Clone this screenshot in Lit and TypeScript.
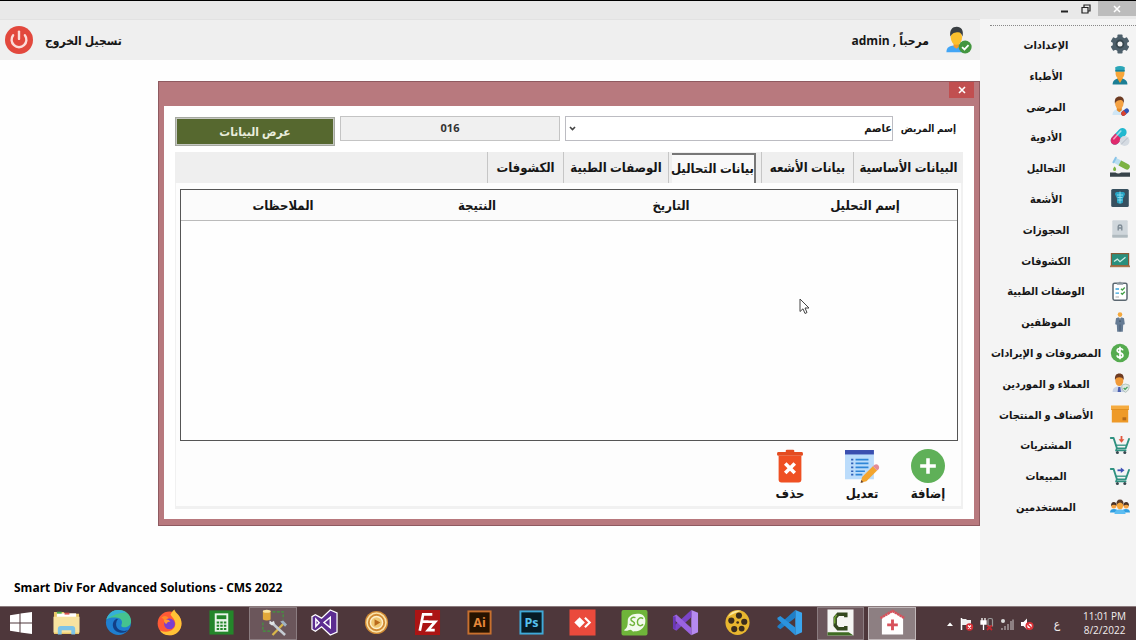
import { LitElement, html, css, svg, TemplateResult } from "lit";
import { customElement, property, state } from "lit/decorators.js";
import { classMap } from "lit/directives/class-map.js";

/* ---------- icon artwork ---------- */

const cart = (mark: TemplateResult) => svg`
  <path d="M.8 3h2.800l3.400 10.500h8.600L19 4" fill="none" stroke="#2f9180" stroke-width="1.900" stroke-linejoin="round" stroke-linecap="round"/>
  <path d="M5.600 10.200h11" fill="none" stroke="#2f9180" stroke-width="1.300"/>
  <path d="M6.600 13.500l-.6 2h10.400" fill="none" stroke="#2f9180" stroke-width="1.500"/>
  <circle cx="7.400" cy="17.400" r="1.500" fill="#37474f"/><circle cx="14.800" cy="17.400" r="1.500" fill="#37474f"/>
  ${mark}`;

const icons: Record<string, TemplateResult> = {
  gear: svg`
    <g fill="#4d5f6a">
      <rect x="7.4" y=".6" width="5.2" height="18.8" rx="1"/>
      <rect x="7.4" y=".6" width="5.2" height="18.8" rx="1" transform="rotate(60 10 10)"/>
      <rect x="7.4" y=".6" width="5.2" height="18.8" rx="1" transform="rotate(120 10 10)"/>
      <circle cx="10" cy="10" r="7.3"/>
    </g>
    <circle cx="10" cy="10" r="4.4" fill="#37474f"/><circle cx="10" cy="10" r="2.5" fill="#f4f4f4"/>`,
  doctor: svg`
    <path d="M2.6 19.4c0-4 3-5.8 7.4-5.8s7.4 1.800 7.400 5.800z" fill="#1c7f95"/>
    <path d="M7 13h6l-3 5z" fill="#f39c2d"/>
    <path d="M5.600 5.500h8.800v3c0 3-2 5.300-4.400 5.300S5.600 11.500 5.600 8.500z" fill="#f7a63a"/>
    <path d="M5.200 2.200Q10 -.3 14.800 2.200l-.3 4.200h-9z" fill="#2ba6b8"/>
    <path d="M5.400 4.900h9.200v1.500H5.400z" fill="#17809a"/>`,
  patient: svg`
    <path d="M2.500 19c0-4 2.600-5.700 6.800-5.700s6.500 1.700 6.500 5.700z" fill="#cfe6f5"/>
    <path d="M6.800 11h5v3.300l-2.500 2-2.500-2z" fill="#e58a26"/>
    <ellipse cx="9.300" cy="7.600" rx="4.200" ry="5.200" fill="#f5a243"/>
    <path d="M4.900 7.500C4.300 2.600 6.500.6 9.600.6s5 2.200 4.200 6.900c-.5-2.200-1.500-3.300-3-3.500-2.500.1-4.600.6-5.900 3.500z" fill="#6d3b22"/>
    <g transform="rotate(-40 15 16)"><rect x="10.500" y="13.800" width="9" height="4.600" rx="2.300" fill="#2f55b5"/><path d="M10.500 16.100a2.300 2.300 0 0 1 2.300-2.300H15v4.600h-2.200a2.300 2.300 0 0 1-2.300-2.300z" fill="#d9432f"/></g>`,
  pills: svg`
    <g transform="rotate(-48 8.800 9.500)">
      <rect x="-1" y="5" width="19.600" height="8.600" rx="4.300" fill="#22b8cf"/>
      <path d="M3.300 5H8.800v8.600H3.300a4.300 4.300 0 0 1 0-8.600z" fill="#e0296c"/>
      <rect x="3" y="6.600" width="12" height="1.600" rx=".8" fill="#fff" opacity=".55"/>
    </g>
    <circle cx="14.600" cy="14" r="4.900" fill="#d5dbe2"/><path d="M11.200 17.300l6.600-6.600" stroke="#b4bcc6"/>`,
  analysis: svg`
    <g transform="rotate(28 11 6)"><rect x="3" y="2.800" width="17" height="5.600" rx="2.600" fill="#b9def0"/><path d="M9.500 2.800h8a2.800 2.800 0 0 1 0 5.600h-8z" fill="#7cb342"/><rect x="2.500" y="2" width="2" height="7" rx=".8" fill="#89c4e8"/></g>
    <path d="M4.600 8.500c1 1.300 1.500 2 1.500 2.900a1.500 1.500 0 0 1-3 0c0-.9.600-1.600 1.500-2.900z" fill="#7cb342"/>
    <path d="M0 14.500h5.500c1.500 1.400 4 1.400 5.600 0H20v4.300H0z" fill="#37434a"/>`,
  xray: svg`
    <rect x="1.200" y="1" width="17.600" height="18" rx="1.500" fill="#37505f"/>
    <path d="M7 4h6a2 2 0 0 1 1.400 3.400L13 10.600v3.600c0 1.800-6 1.800-6 0v-3.600L5.600 7.400A2 2 0 0 1 7 4z" fill="#27a4c4"/>
    <path d="M10 3.500v12M7 7h6M7.500 9.500h5M7.500 12h5" stroke="#8fe0f0" stroke-width=".9"/>`,
  booking: svg`
    <rect x="2.300" y="1.200" width="15.400" height="17.400" rx="1" fill="#cfd6db"/><path d="M2.300 15.800h15.400v2.800H2.300z" fill="#b0babf"/>
    <path d="M8.200 11.500v-4q0-1.500 1.800-1.500t1.800 1.500v4M8.200 9h3.600" fill="none" stroke="#7f8c96" stroke-width="1.400"/>`,
  board: svg`
    <rect x=".8" y="3" width="18.400" height="13" fill="#8a5a36"/><rect x="2" y="4.200" width="16" height="10.800" fill="#2a8f7c"/>
    <path d="M4 11.500l3.300-2.400 2.700 2.600 5.500-4.400" fill="none" stroke="#cfeee6" stroke-width="1.300"/>
    <rect x="0" y="15.500" width="20" height="1.700" fill="#a9744b"/>`,
  clipboard: svg`
    <rect x="3" y="2.200" width="14" height="17" rx="1.600" fill="#fff" stroke="#5b6770" stroke-width="1.500"/>
    <path d="M6.800 3.800V2h1.500a1.800 1.800 0 0 1 3.400 0h1.500v1.800z" fill="#8b969e"/>
    <path d="M5.500 8h3.500M5.500 12.200h3.500" stroke="#35a2dc" stroke-width="1.300"/><path d="M5.500 16h3.500" stroke="#aaa"/>
    <path d="M11 7.700l1.300 1.300 2.500-2.500M11 12l1.300 1.300 2.500-2.500" fill="none" stroke="#43a047" stroke-width="1.300"/>`,
  employee: svg`
    <circle cx="10" cy="2.600" r="2.300" fill="#f5a83c"/>
    <path d="M6 6.200Q10 4.200 14 6.200l.8 6-1.600.5-.4 7H7.200l-.4-7-1.600-.5z" fill="#647a93"/>
    <path d="M8.800 5.300h2.400L10 9z" fill="#fff"/><path d="M10 6v4" stroke="#32475c"/><path d="M10 12.500v7" stroke="#42566b" stroke-width=".8"/>`,
  money: svg`
    <circle cx="10" cy="10" r="9.200" fill="#55ab4f"/>
    <path d="M12.800 7.400c-.3-1.400-1.500-1.900-2.800-1.900-1.600 0-2.800.8-2.800 2.100 0 3 5.700 1.500 5.700 4.600 0 1.400-1.200 2.300-2.900 2.300-1.600 0-2.800-.8-3-2.200M10 3.700v12.600" fill="none" stroke="#fff" stroke-width="1.700"/>`,
  client: svg`
    <path d="M2.600 19c0-3.800 2.500-5.400 6.700-5.400s6.700 1.600 6.700 5.400z" fill="#c9d3e6"/><path d="M8.300 14h2l.7 5H7.600z" fill="#4a5fb0"/>
    <ellipse cx="9.300" cy="7.800" rx="4" ry="5.200" fill="#f19a38"/>
    <path d="M5 7C4.600 2.600 6.300.6 9.400.6S14.100 2.600 13.700 7c-1-2-2.200-2.700-4.400-2.700S6 5 5 7z" fill="#6d3b22"/>
    <path d="M15.500 11l3.700 1.100c.2 3.600-1 6-3.700 7.200-2.700-1.200-3.900-3.600-3.700-7.200z" fill="#dfe9e4" stroke="#93a79d" stroke-width=".6"/>
    <path d="M13.700 15l1.400 1.400 2.400-2.600" fill="none" stroke="#3f9e57" stroke-width="1.200"/>`,
  box: svg`
    <rect x="1.800" y="4" width="16.400" height="14.500" fill="#ee9a28"/><rect x="1" y="1.500" width="18" height="4" fill="#f5ab3f"/>
    <path d="M1 5.500h18" stroke="#d9861a" stroke-width=".7"/><rect x="12.500" y="13.300" width="3.700" height="3" fill="#b36a19"/>`,
  buy: cart(svg`<path d="M11.500 1v4" stroke="#e2573d" stroke-width="1.800"/><path d="M8.600 4.200h5.800l-2.900 3.500z" fill="#e2573d"/>`),
  sell: cart(svg`<path d="M7.500 4.300h4" stroke="#3f51b5" stroke-width="1.800"/><path d="M10.800 1.500v5.600l3.700-2.800z" fill="#3f51b5"/>`),
  users: svg`
    <path d="M0 15.500c0-2.500 1.500-3.500 4-3.500s4 1 4 3.500zM12 15.500c0-2.500 1.500-3.500 4-3.500s4 1 4 3.500z" fill="#2f9ee0"/>
    <circle cx="3.800" cy="8.800" r="2.600" fill="#f5a243"/><path d="M1 9q0-4 2.800-4T6.600 9Q4 6.500 1 9z" fill="#4b3327"/>
    <circle cx="16.200" cy="8.800" r="2.600" fill="#f5a243"/><path d="M13.400 9q0-4 2.800-4t2.800 4q-2.600-2.500-5.600 0z" fill="#4b3327"/>
    <path d="M4.500 17c0-3.400 2-4.600 5.500-4.600s5.500 1.200 5.500 4.600z" fill="#5cbdf2"/>
    <ellipse cx="10" cy="8" rx="3.200" ry="4.200" fill="#f7a63a"/><path d="M6.500 8q-.5-5.500 3.500-5.500T13.500 8Q12 5.500 10 5.500T6.500 8z" fill="#5d3d2b"/>`,

  power: svg`
    <circle cx="10" cy="10" r="10" fill="#e2483d"/>
    <path d="M5.800 6.600a5.300 5.300 0 1 0 8.400 0" fill="none" stroke="#fbdcd9" stroke-width="1.700" stroke-linecap="round"/>
    <path d="M10 4v5.200" stroke="#fbdcd9" stroke-width="1.700" stroke-linecap="round"/>`,
  admin: svg`
    <path d="M.3 19c0-3.800 2.300-5 7.400-5s7.300 1.200 7.300 5z" fill="#42a5f5"/>
    <path d="M5.600 12h4.200v3l-2.100 1.500L5.600 15z" fill="#f09a2c"/>
    <ellipse cx="7.700" cy="8" rx="4.200" ry="5.600" fill="#fbc02d"/>
    <path d="M3.200 7.500C2.500 2.500 4.600.2 8 .2s5.200 2.500 4.300 7.300C11.500 5.400 10.800 4.300 9 4.200 6.600 4.300 4.500 4.700 3.200 7.500z" fill="#3a3f43"/>
    <circle cx="14.200" cy="15.200" r="4.800" fill="#43963f"/><path d="M11.900 15.200l1.800 1.800 3-3.200" fill="none" stroke="#fff" stroke-width="1.300"/>`,
  add: svg`<circle cx="10" cy="10" r="10" fill="#5fb058"/><path d="M10 5.400v9.200M5.400 10h9.200" stroke="#fff" stroke-width="2.100"/>`,
  edit: svg`
    <rect x="0" y=".6" width="17" height="17.200" fill="#bbdcfb"/><rect x="0" y=".6" width="17" height="2.600" fill="#3a4fb0"/>
    <path d="M6.200 6.200h7.600M6.200 8.500h7.600M6.200 10.800h7.600M6.200 13.100h5.500M6.200 15.100h4" stroke="#2f86d8" stroke-width="1"/>
    <path d="M3.600 6.200h1.300M3.600 8.500h1.300M3.600 10.800h1.300M3.600 13.100h1.300M3.600 15.100h1.300" stroke="#2f5fb8" stroke-width="1"/>
    <path d="M9.200 19.900l.9-3.500 6.300-6.200 2.500 2.500-6.300 6.200z" fill="#f3a52f"/><path d="M16.400 10.200l1-1q1.300-.6 2.200.3t.3 2.200l-1 1z" fill="#e28b97"/>
    <path d="M9.200 19.900l.4-1.600 1.200 1.200z" fill="#5d4037"/>`,
  trash: svg`
    <path d="M3.300 4h13.400v14a1.700 1.700 0 0 1-1.700 1.700H5A1.700 1.700 0 0 1 3.300 18z" fill="#ef5023"/>
    <rect x="2.400" y="1.700" width="15.200" height="2.300" rx=".8" fill="#e44c20"/><rect x="7.500" y=".4" width="5" height="2" rx=".7" fill="#e44c20"/>
    <path d="M7.200 8.500l5.600 5.600M12.800 8.500l-5.600 5.600" stroke="#fff" stroke-width="2.100"/>`,
};

/* Taskbar artwork is drawn on a 28 x 28 board. */
const apps: { name: string; active?: boolean; lit?: boolean; art: TemplateResult }[] = [
  { name: "Explorer", art: svg`
    <path d="M1 3h10l2 2h14v21H1z" fill="#e9c868"/><path d="M4 4.500h20v7H4z" fill="#fff"/>
    <path d="M4 2.800h5v2H4z" fill="#4caf50"/><path d="M12 3.800h5v2h-5z" fill="#d9534f"/>
    <path d="M.5 8h27v16.500H.5z" fill="#f7e3a0"/><path d="M5 26.500v-6q0-3 3-3h12q3 0 3 3v6h-4V22H9v4.500z" fill="#7cc4e8"/>` },
  { name: "Edge", art: svg`
    <circle cx="14" cy="14" r="13" fill="#1f7fd0"/>
    <path d="M1.500 11C3.500 4 8.500 1 14 1c7.500 0 13 5 13 11.500 0 4-3 6.500-6.500 6.500-3 0-4-1-3.500-2.500 1.500-3 .5-7-4.500-7.500C8 8.600 4 9 1.500 11z" fill="#45c48f"/>
    <path d="M1.500 11C3.500 4 8.500 1 14 1q4.500 0 8 2.600Q10 4 1.500 11z" fill="#35b0d8"/>
    <path d="M12 10c-6 3-5 12 2 14 4 1.200 8 .6 10.300-2.400C21 24 11 23 11.500 15q.2-3 2-4.600z" fill="#123f86"/>` },
  { name: "Firefox", art: svg`
    <circle cx="14" cy="15" r="12.300" fill="#ff5a36"/>
    <path d="M15 6c1-2.500 2.500-4 4-5.500 1 4 7.500 6 7.500 14.500 0 7-5.500 12.300-12.500 12.300-5 0-8-2-10-5 9 3.500 17-1 16-8-.5-3.500-3-5.500-5-8.300z" fill="#ffc236"/>
    <path d="M3 6q1 1.500 3 2.500Q10 6 13 9L9 12z" fill="#ff8a2b"/><circle cx="14" cy="15.500" r="5.600" fill="#7a3fd0"/>
    <path d="M8 12q4-2.500 7 1-3 0-4.500 2.500Q9 15 8 12z" fill="#ff9a2e"/>` },
  { name: "Calculator", art: svg`
    <rect x="1.500" y="1.500" width="25" height="25" fill="#24862a"/><rect x="7" y="4.500" width="14" height="19" fill="#e9f5e9"/>
    <rect x="9" y="6.500" width="10" height="4" fill="#24862a"/>
    <path d="M9 14h2.600M12.700 14h2.600M16.400 14H19M9 17.400h2.600M12.700 17.400h2.600M16.400 17.400H19M9 20.800h2.600M12.700 20.800h2.600M16.400 20.800H19" stroke="#24862a" stroke-width="2.200"/>` },
  { name: "Database tools", active: true, art: svg`
    <path d="M3 2h8v9q-4 2-8 0z" fill="#e3a83a"/><ellipse cx="7" cy="2.400" rx="4" ry="1.600" fill="#fbe4a0"/>
    <path d="M13 3h11v8M3 14v9h8" fill="none" stroke="#3f9b3c" stroke-width="1.200" stroke-dasharray="3 1.500"/>
    <path d="M13 27L25 14.500" stroke="#d9b64a" stroke-width="2.400"/><path d="M12 14l14 13" stroke="#c5ccd3" stroke-width="2.600"/>
    <path d="M21 13l3-1 4 4-2 2.500z" fill="#9fb2c4"/><path d="M10 12l2.500 1.800 2-1.600.8 3-2.800 2-2.800-2z" fill="#dfe4e8"/>` },
  { name: "Visual Studio Blend", art: svg`
    <path d="M20 1l7 3v20l-7 3-9-8.500L4.500 23 1 21V8l3.500-2L11 9.500z" fill="#5c2d91" stroke="#fff" stroke-width="1.300"/>
    <path d="M5 10.500v7.500l3.500-3.700zM20 8.500v11l-6.500-5.500z" fill="#5c2d91" stroke="#fff" stroke-width="1.500"/>` },
  { name: "Media player", art: svg`
    <circle cx="14" cy="14" r="12" fill="#d08a34"/><circle cx="14" cy="14" r="9.800" fill="none" stroke="#fbe3a8" stroke-width="1.700"/>
    <circle cx="14" cy="14" r="6.300" fill="#f0c873" stroke="#fdf0cc" stroke-width="1.500"/><path d="M12 10.500v7l6-3.500z" fill="#b96a1c"/>` },
  { name: "FileZilla", art: svg`
    <rect x="1" y="1" width="26" height="26" fill="#ac1414"/>
    <path d="M6 22.500L9.500 5.500H19M8 13h7M13 13.200h9L14.500 22H21.500" fill="none" stroke="#fff" stroke-width="2.800"/>` },
  { name: "Illustrator", art: svg`
    <rect x="2.500" y="2.500" width="23" height="23" fill="#261300" stroke="#c8702e" stroke-width="2"/><text class="glyph" x="14" y="19" fill="#e8893a">Ai</text>` },
  { name: "Photoshop", art: svg`
    <rect x="2.500" y="2.500" width="23" height="23" fill="#071c26" stroke="#3fa9d8" stroke-width="2"/><text class="glyph" x="14" y="19" fill="#56c1ef">Ps</text>` },
  { name: "AnyDesk", art: svg`
    <rect x=".5" y=".5" width="27" height="27" fill="#ea4a3c"/><path d="M11 8.500l5.500 5.500-5.500 5.500L5.500 14z" fill="#fff"/>
    <path d="M16.500 9l5 5-5 5" fill="none" stroke="#fff" stroke-width="2.200"/>` },
  { name: "Script recorder", art: svg`
    <rect x=".5" y="1" width="27" height="26.500" rx="2" fill="#6fb43a"/>
    <path d="M3 22c4-2 4-6 4-10 0-5 6-8 12-7s7 6 6 10-5 8-9 8-3 1-5-1-4 2-8 0z" fill="#f2faed"/>
    <path d="M15 9c-3-1-5.500.5-4.500 2.500s4 1.500 3.500 4-4 1.500-5 0M23 10c-3-2-6 0-6 3.500s3 5 6 2.500" fill="none" stroke="#6fb43a" stroke-width="1.500"/>` },
  { name: "Visual Studio", art: svg`
    <path d="M20 1l7 3v20l-7 3.200z" fill="#b58af0"/><path d="M20 1v7.500L4.500 22.500 1 20.500v-2z" fill="#7b44c8"/><path d="M20 27.200v-7.500L4.500 5.800 1 7.700v2.500z" fill="#9a63e0"/><path d="M1 7.700h2.800v12.800H1z" fill="#6a38b5"/>` },
  { name: "Video editor", art: svg`
    <ellipse cx="14" cy="14" rx="12.500" ry="13" fill="#e8b62f"/><path d="M4 8Q9 0 18 1.800 9 5 4 8z" fill="#fbe89a"/>
    <g fill="#3a2c1d"><circle cx="15.500" cy="6.800" r="3.200"/><circle cx="7.600" cy="12" r="3.200"/><circle cx="21" cy="13.200" r="3.200"/><circle cx="10.600" cy="20.800" r="3.200"/><circle cx="18.300" cy="20.300" r="3"/><circle cx="14.200" cy="14" r="1.400"/></g>` },
  { name: "Visual Studio Code", art: svg`
    <path d="M20 1l7 3v20l-7 3.200z" fill="#3aa5ee"/><path d="M20 1v8L4.500 21 1.500 19v-1.500z" fill="#1f7fc8"/><path d="M20 27.200v-8L4.500 7.200 1.500 9v1.500z" fill="#2b93de"/>` },
  { name: "Camtasia", active: true, art: svg`
    <rect x=".5" y=".5" width="27" height="27" fill="#f5f5f3"/><path d="M.5 24h22l5 3.500H.5z" fill="#3f6b22"/>
    <path d="M19.500 8.500V5.500h-8L8.500 9v8l3 3.500h8v-3" fill="none" stroke="#34481f" stroke-width="3.600"/><path d="M10 6l-2 3v6" fill="none" stroke="#74a838" stroke-width="1.500"/>` },
  { name: "Clinic", active: true, lit: true, art: svg`
    <path d="M3 9L14 2.500 25 9v17.500H3z" fill="#fff"/><path d="M1.500 9.500L14 2l12.500 7.500" fill="none" stroke="#d8525c" stroke-width="2.600" stroke-dasharray="2.400 .5"/>
    <path d="M14 11v11M8.500 16.500h11" stroke="#d8525c" stroke-width="3"/>` },
];

const menu: [string, string][] = [
  ["gear", "الإعدادات"], ["doctor", "الأطباء"], ["patient", "المرضى"], ["pills", "الأدوية"],
  ["analysis", "التحاليل"], ["xray", "الأشعة"], ["booking", "الحجوزات"], ["board", "الكشوفات"],
  ["clipboard", "الوصفات الطبية"], ["employee", "الموظفين"], ["money", "المصروفات و الإيرادات"],
  ["client", "العملاء و الموردين"], ["box", "الأصناف و المنتجات"], ["buy", "المشتريات"],
  ["sell", "المبيعات"], ["users", "المستخدمين"],
];

const tabs = ["البيانات الأساسية", "بيانات الأشعه", "بيانات التحاليل", "الوصفات الطبية", "الكشوفات"];
const columns = ["إسم التحليل", "التاريخ", "النتيجة", "الملاحظات"];

const reset = css`
  * { box-sizing: border-box; }
  button, input, select { font: inherit; color: inherit; margin: 0; padding: 0; border: 0; border-radius: 0; background: none; }
  svg { display: block; }
`;

@customElement("cms-icon")
class CmsIcon extends LitElement {
  static styles = css`
    :host { display: block; flex: none; }
    svg { display: block; width: 100%; height: 100%; overflow: visible; }
  `;
  @property() name = "";
  render() {
    return html`<svg viewBox="0 0 20 20" aria-hidden="true">${icons[this.name]}</svg>`;
  }
}

@customElement("side-menu")
class SideMenu extends LitElement {
  static styles = [reset, css`
    :host { display: flex; flex-direction: column; background: #f4f4f4; padding: 6px 0 84px; }
    .rule { border-top: 1px dotted #888; margin-left: 10px; height: 4px; }
    .list { flex: 1; display: grid; grid-auto-rows: 1fr; margin: 0; padding: 0; list-style: none; }
    .row { display: flex; }
    .entry { flex: 1; display: flex; align-items: center; padding: 0 6px 0 2px; font-size: 11px; font-weight: 700; color: #161616; text-decoration: none; white-space: nowrap; }
    .pic { width: 20px; height: 20px; }
    .text { flex: 1; text-align: center; }
  `];
  render() {
    return html`
      <div class="rule"></div>
      <ul class="list">
        ${menu.map(([icon, text]) => html`
          <li class="row"><a class="entry" href="#${icon}"><cms-icon class="pic" name=${icon}></cms-icon><span class="text">${text}</span></a></li>`)}
      </ul>`;
  }
}

@customElement("patient-window")
class PatientWindow extends LitElement {
  static styles = [reset, css`
    :host { display: flex; flex-direction: column; background: #b8797e; border: 1px solid #8f5a60; padding: 0 5px 6px; }
    .caption { height: 24px; display: flex; }
    .close { width: 25px; height: 16px; background: #c14f50; display: grid; place-items: center; }
    .body { flex: 1; background: #fff; padding: 10px 11px; display: flex; flex-direction: column; }
    .fields { display: flex; align-items: flex-start; gap: 5px; height: 36px; font-size: 11px; font-weight: 700; }
    .label { flex: none; width: 65px; font-size: 10px; line-height: 24px; padding-right: 7px; white-space: nowrap; }
    .combo { flex: 328; position: relative; }
    .select { display: block; width: 100%; height: 25px; border: 1px solid #bcbcc2; background: #fff; appearance: none; padding: 0 0 2px; }
    .arrow { position: absolute; left: 4px; top: 10px; pointer-events: none; }
    .number { flex: 218; min-width: 0; height: 25px; border: 1px solid #c4c4c4; background: #f0f0f0; text-align: center; color: #333; padding-bottom: 2px; }
    .show { flex: 156; height: 29px; margin-top: 1px; border: 2px solid #c6c8c2; outline: 1px solid #a5a8a0; outline-offset: -1px; background: #56682f; color: #e9eddc; font-size: 12px; }
    .tabs { display: flex; height: 31px; background: #efefef; font-size: 13px; font-weight: 700; }
    .tab { border-left: 1px solid #c6c6c6; white-space: nowrap; text-align: center; flex: none; padding-bottom: 2px; }
    .t0 { width: 110px; } .t1 { width: 92px; } .t2 { width: 93px; } .t3 { width: 105px; } .t4 { width: 76px; }
    .chosen { padding: 0 5px 0 3px; }
    .face { display: block; height: 30px; line-height: 27px; background: #f9f9f9; border: solid #777; border-width: 2px 2px 0 0; }
    .page { flex: 1; display: flex; flex-direction: column; background: #fdfdfd; border: solid #f1f1f1; border-width: 0 2px 3px 1px; padding: 6px 3px 0 4px; }
    .grid { flex: 1; border: 1px solid #555; background: #fefefe; }
    .table { width: 100%; border-collapse: collapse; table-layout: fixed; }
    .head { height: 30px; padding: 0 0 0 10px; direction: rtl; font-size: 13px; font-weight: 700; text-align: center; background: #fbfbfb; border-bottom: 1px solid #bbb; }
    .actions { display: flex; height: 65px; padding: 8px 0 0; font-size: 13px; font-weight: 700; }
    .action { width: 60px; margin-left: 6px; display: flex; flex-direction: column; align-items: center; white-space: nowrap; line-height: 20px; }
    .action + .action + .action { margin-right: 6px; }
    .art { width: 34px; height: 34px; }
  `];
  @state() current = 2;
  render() {
    return html`
      <div class="caption">
        <button class="close" aria-label="إغلاق"><svg width="8" height="8" viewBox="0 0 8 8"><path d="M1 1l6 6M7 1L1 7" stroke="#fff" stroke-width="1.600"/></svg></button>
      </div>
      <div class="body">
        <div class="fields">
          <label class="label" for="patient">إسم المريض</label>
          <div class="combo">
            <select class="select" id="patient"><option>عاصم</option></select>
            <svg class="arrow" width="7" height="5" viewBox="0 0 7 5"><path d="M1 1l2.500 2.600L6 1" fill="none" stroke="#444" stroke-width="1.600"/></svg>
          </div>
          <input class="number" aria-label="رقم المريض" value="016" readonly />
          <button class="show">عرض البيانات</button>
        </div>
        <div class="tabs" role="tablist">
          ${tabs.map((t, i) => html`
            <button class=${classMap({ tab: true, ["t" + i]: true, chosen: i === this.current })} role="tab"
              aria-selected=${i === this.current} @click=${() => (this.current = i)}>
              <span class=${classMap({ face: i === this.current })}>${t}</span></button>`)}
        </div>
        <div class="page" role="tabpanel">
          <div class="grid">
            <table class="table"><thead><tr>${columns.map((c) => html`<th class="head" scope="col">${c}</th>`)}</tr></thead><tbody></tbody></table>
          </div>
          <div class="actions">
            <button class="action"><cms-icon class="art" name="add"></cms-icon>إضافة</button>
            <button class="action"><cms-icon class="art" name="edit"></cms-icon>تعديل</button>
            <button class="action"><cms-icon class="art" name="trash"></cms-icon>حذف</button>
          </div>
        </div>
      </div>`;
  }
}

@customElement("task-bar")
class TaskBar extends LitElement {
  static styles = [reset, css`
    :host { display: flex; height: 34px; background: #4e373b; border-top: 1px solid #8b7b7d; color: #f2eeee; direction: ltr; }
    .start { width: 41px; display: grid; place-items: center; padding-bottom: 2px; }
    .apps { flex: 1; display: grid; grid-template-columns: repeat(17, 1fr); }
    .app { display: grid; place-items: center; margin: 0 2px; border: 1px solid transparent; padding-bottom: 2px; }
    .active { background: #6b565b; border-color: #8b7c80; }
    .lit { background: #8d7f82; border-color: #c0b7b9; }
    .glyph { font: 700 13px "Open Sans", sans-serif; text-anchor: middle; }
    .tray { width: 218px; display: flex; align-items: center; padding-left: 28px; }
    .status { display: flex; align-items: center; gap: 6px; }
    .lang { width: 46px; text-align: center; font-size: 12px; }
    .clock { font: 10px/14px "Open Sans", sans-serif; margin-left: 3px; padding-bottom: 2px; text-align: center; white-space: nowrap; }
    .line { display: block; }
  `];
  render() {
    return html`
      <button class="start" aria-label="Start"><svg width="22" height="22" viewBox="0 0 22 22"><path d="M0 3.200l9.500-1.500v8.800H0zM10.500 1.500L22 0v10.500H10.500zM0 11.500h9.500v8.800L0 18.800zM10.500 11.500H22V22l-11.500-1.500z" fill="#fff"/></svg></button>
      <div class="apps">
        ${apps.map((a) => html`<button class=${classMap({ app: true, active: !!a.active, lit: !!a.lit })} aria-label=${a.name}><svg width="27" height="27" viewBox="0 0 28 28">${a.art}</svg></button>`)}
      </div>
      <div class="tray">
        <div class="status">
          <svg width="8" height="12" viewBox="0 0 8 12"><path d="M1 8l3-3.500L7 8z" fill="#fff"/></svg>
          <svg width="14" height="14" viewBox="0 0 14 14"><path d="M1.500 1v12" stroke="#fff" stroke-width="1.500"/><path d="M2 2h4l1 1h4v6H7L6 8H2z" fill="#eee"/><circle cx="9.500" cy="10" r="3.700" fill="#d62f35"/><path d="M8 8.500l3 3M11 8.500l-3 3" stroke="#fff" stroke-width="1.200"/></svg>
          <svg width="14" height="14" viewBox="0 0 14 14"><path d="M2 1v3M5 1v3M1 4h5v3H1zM3.500 7v6" stroke="#fff" fill="#fff" stroke-width="1.300"/><path d="M8 9V3q0-1.500 1.500-1.500h1.500q1.500 0 1.500 1.500v6z" fill="none" stroke="#999" stroke-width="1.200"/><path d="M7 8.500l5 4.500M12 8.500L7 13" stroke="#c3292f" stroke-width="1.700"/></svg>
          <svg width="14" height="14" viewBox="0 0 14 14"><circle cx="3" cy="4" r="2" fill="#ddd"/><path d="M2 13v-2M5 13V9M8 13V7M11 13V4M13 13V2.500" stroke="#9f9396" stroke-width="1.600"/></svg>
          <svg width="14" height="14" viewBox="0 0 14 14"><path d="M1 5h2.500L7 1.500v11L3.500 9H1z" fill="#fff"/><circle cx="9.500" cy="9" r="3.200" fill="#fff" stroke="#dc3238" stroke-width="1.700"/><path d="M7.500 7l4 4" stroke="#dc3238" stroke-width="1.500"/></svg>
        </div>
        <span class="lang">ع</span>
        <time class="clock"><span class="line">11:01 PM</span><span class="line">8/2/2022</span></time>
      </div>`;
  }
}

@customElement("app-root")
class AppRoot extends LitElement {
  static styles = [reset, css`
    :host { display: flex; flex-direction: column; min-height: 100vh; direction: rtl; position: relative; background: #fefefe; color: #161616; font-family: "Open Sans", "DejaVu Sans Condensed", "DejaVu Sans", sans-serif; font-size: 12px; overflow: hidden; }
    .frame { height: 19px; border-top: 1px solid #000; background: #e9e9e9; display: flex; }
    .control { height: 15px; display: grid; place-items: center; }
    .quit { width: 38px; background: #bcbcbc; }
    .size { width: 24px; } .min { width: 20px; }
    .shell { flex: 1; display: flex; }
    .side { width: 156px; }
    .main { flex: 1; display: flex; flex-direction: column; }
    .bar { height: 41px; background: #efefef; border-top: 1px solid #e2e2e2; display: flex; align-items: center; justify-content: space-between; padding: 0 7px 0 5px; font-weight: 700; }
    .who, .exit { display: flex; align-items: center; font-weight: 700; }
    .who { gap: 17px; } .exit { gap: 12px; }
    .face { width: 27px; height: 30px; }
    .power { width: 28px; height: 28px; }
    .window { flex: 1; margin: 21px 0 0; margin-left: 158px; }
    .foot { height: 80px; padding: 0 14px 8px; display: flex; align-items: flex-end; line-height: 20px; direction: ltr; font-weight: 700; font-size: 12px; color: #000; }
    .pointer { position: absolute; left: 799px; top: 298px; }
  `];
  render() {
    return html`
      <div class="frame">
        <button class="control quit" aria-label="إغلاق"><svg width="8" height="8" viewBox="0 0 8 8"><path d="M1 1l6 6M7 1L1 7" stroke="#fff" stroke-width="1.500"/></svg></button>
        <button class="control size" aria-label="استعادة"><svg width="10" height="10" viewBox="0 0 10 10"><path d="M3 3V1h6v6H7" fill="none" stroke="#222" stroke-width="1.200"/><path d="M1 3.500h6V9H1z" fill="none" stroke="#222" stroke-width="1.200"/></svg></button>
        <button class="control min" aria-label="تصغير"><svg width="8" height="8" viewBox="0 0 8 8"><path d="M1 6.500h7" stroke="#222" stroke-width="2"/></svg></button>
      </div>
      <div class="shell">
        <side-menu class="side"></side-menu>
        <main class="main">
          <header class="bar">
            <div class="who"><cms-icon class="face" name="admin"></cms-icon><span>مرحباً , admin</span></div>
            <button class="exit"><span>تسجيل الخروج</span><cms-icon class="power" name="power"></cms-icon></button>
          </header>
          <patient-window class="window"></patient-window>
          <footer class="foot">Smart Div For Advanced Solutions - CMS 2022</footer>
        </main>
      </div>
      <task-bar></task-bar>
      <svg class="pointer" width="11" height="17" viewBox="0 0 11 17"><path d="M1 1v12.500l3-2.700 2 4.700 2-1-2-4.500h4z" fill="#fff" stroke="#444" stroke-width="1"/></svg>`;
  }
}
